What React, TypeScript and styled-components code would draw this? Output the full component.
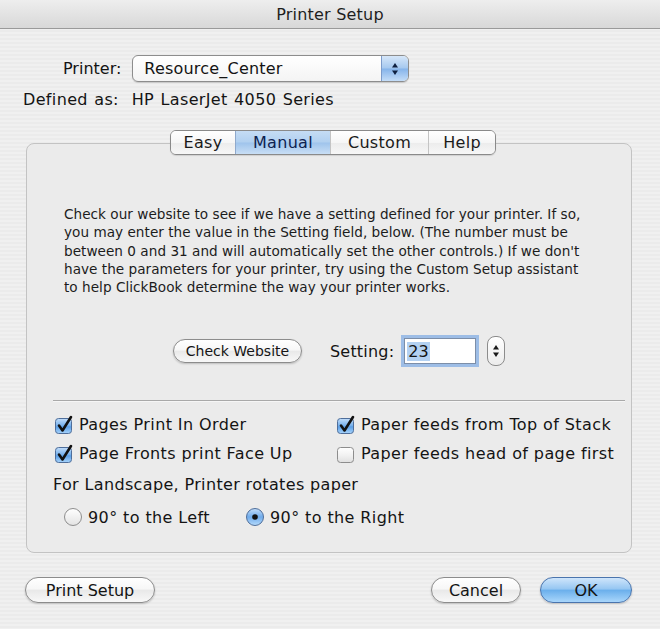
import React from "react";
import styled, { createGlobalStyle } from "styled-components";

const GlobalStyle = createGlobalStyle`
  html, body { margin: 0; padding: 0; }
  body {
    font-family: "DejaVu Sans", "Liberation Sans", sans-serif;
    color: #141414;
  }
`;

const Window = styled.div`
  width: 660px;
  height: 629px;
  display: flex;
  flex-direction: column;
  background: repeating-linear-gradient(#f0f0f0 0 2px, #ebebeb 2px 4px);
  overflow: hidden;
`;

const TitleBar = styled.div`
  height: 28px;
  flex-shrink: 0;
  display: flex;
  align-items: center;
  justify-content: center;
  font-size: 16px;
  letter-spacing: 0.2px;
  color: #1e1e1e;
  background: linear-gradient(#eeeeee, #d8d8d8);
  border-bottom: 1px solid #9a9a9a;
`;

const PrinterRow = styled.div`
  margin-top: 26px;
  padding-left: 63px;
  display: flex;
  align-items: center;
  gap: 11px;
  font-size: 16px;
`;

const Popup = styled.div`
  width: 277px;
  height: 27px;
  box-sizing: border-box;
  display: flex;
  border: 1px solid #8d8d8d;
  border-radius: 6px;
  overflow: hidden;
  background: linear-gradient(#ffffff, #f4f4f4);
  box-shadow: 0 1px 1px rgba(0, 0, 0, 0.15);
`;

const PopupText = styled.span`
  flex: 1;
  padding-left: 11px;
  line-height: 25px;
  letter-spacing: 0.2px;
`;

const PopupArrows = styled.div`
  width: 26px;
  display: flex;
  align-items: center;
  justify-content: center;
  border-left: 1px solid #7d9ccb;
  background: linear-gradient(#d6e7f9 0%, #a6c9ef 48%, #86b4ea 52%, #c4ddf8 100%);
`;

const DefinedRow = styled.div`
  margin-top: 8px;
  padding-left: 23px;
  font-size: 16px;
  line-height: 20px;
  letter-spacing: 0.35px;
  word-spacing: 1px;
`;

const TabStrip = styled.div`
  margin-top: 20px;
  margin-left: 170px;
  display: flex;
  position: relative;
  z-index: 1;
  align-self: flex-start;
  border: 1px solid #8a8a8a;
  border-radius: 6px;
  overflow: hidden;
  box-shadow: 0 1px 1px rgba(0, 0, 0, 0.12);
`;

const Tab = styled.div<{ $active?: boolean; $w: number }>`
  width: ${(p) => p.$w}px;
  height: 23px;
  display: flex;
  align-items: center;
  justify-content: center;
  font-size: 16px;
  letter-spacing: 0.3px;
  color: ${(p) => (p.$active ? "#0e2250" : "#1a1a1a")};
  border-left: 1px solid ${(p) => (p.$active ? "#8fa9cc" : "#c4c4c4")};
  &:first-child { border-left: none; }
  background: ${(p) =>
    p.$active
      ? "linear-gradient(#c5dcf4 0%, #b1d0f0 48%, #9fc4ec 52%, #c8def5 100%)"
      : "linear-gradient(#ffffff 0%, #f6f6f6 50%, #ececec 52%, #f7f7f7 100%)"};
`;

const Group = styled.div`
  margin-top: -12px;
  margin-left: 26px;
  width: 606px;
  height: 410px;
  box-sizing: border-box;
  padding: 61px 6px 0 26px;
  border: 1px solid #c3c3c3;
  border-radius: 8px;
  background: #ebebeb;
  display: flex;
  flex-direction: column;
`;

const Paragraph = styled.p`
  margin: 0 0 0 11px;
  font-size: 13.6px;
  line-height: 18.3px;
  letter-spacing: 0.03px;
  color: #1c1c1c;
`;

const SettingRow = styled.div`
  margin: 39px 0 0 120px;
  height: 32px;
  display: flex;
  align-items: center;
  font-size: 16px;
`;

const PillButton = styled.button<{ $w: number; $primary?: boolean; $h?: number }>`
  width: ${(p) => p.$w}px;
  height: ${(p) => p.$h ?? 26}px;
  padding: 0;
  font-family: inherit;
  font-size: ${(p) => (p.$h ? 14 : 16)}px;
  color: #141414;
  border-radius: 14px;
  border: 1px solid ${(p) => (p.$primary ? "#4a74ad" : "#8c8c8c")};
  background: ${(p) =>
    p.$primary
      ? "linear-gradient(#cfe5fb 0%, #97c7f2 45%, #6cb0ec 52%, #a9d6fb 100%)"
      : "linear-gradient(#ffffff 0%, #f7f7f7 45%, #e9e9e9 52%, #f8f8f8 100%)"};
  box-shadow: 0 1px 2px rgba(0, 0, 0, 0.2);
`;

const SettingLabel = styled.span`
  margin-left: 28px;
  letter-spacing: 0.2px;
`;

const Field = styled.div`
  margin-left: 10px;
  width: 72px;
  height: 26px;
  box-sizing: border-box;
  border: 1px solid #7c8ea8;
  background: #fff;
  box-shadow: 0 0 0 3px #9dbde6;
  display: flex;
  align-items: center;
  padding-left: 2px;
`;

const Selected = styled.span`
  background: #b3d1f2;
  line-height: 19px;
  padding: 0 1px;
`;

const Stepper = styled.div`
  margin-left: 11px;
  width: 18px;
  height: 30px;
  box-sizing: border-box;
  border: 1px solid #8c8c8c;
  border-radius: 8px;
  background: linear-gradient(#ffffff, #ececec);
  display: flex;
  align-items: center;
  justify-content: center;
`;

const Separator = styled.div`
  margin-top: 33px;
  height: 1px;
  background: #a9a9a9;
  border-bottom: 1px solid #f6f6f6;
`;

const CheckGrid = styled.div`
  margin: 8px 0 0 1px;
  display: grid;
  grid-template-columns: 282px 1fr;
  grid-auto-rows: 29px;
  font-size: 16px;
`;

const Option = styled.label`
  display: flex;
  align-items: center;
  gap: 5px;
  white-space: nowrap;
  letter-spacing: 0.4px;
`;

const LandscapeLabel = styled.div`
  margin-top: 7px;
  font-size: 16px;
  line-height: 20px;
  letter-spacing: 0.35px;
`;

const RadioRow = styled.div`
  margin: 11px 0 0 10px;
  height: 22px;
  display: flex;
  font-size: 16px;
`;

const RadioSlot = styled.div<{ $w: number }>`
  width: ${(p) => p.$w}px;
  display: flex;
`;

const Footer = styled.div`
  margin-top: 24px;
  padding: 0 28px 0 25px;
  display: flex;
  align-items: center;
  gap: 19px;
`;

const Spacer = styled.div`
  flex: 1;
`;

const Arrows = ({ color = "#1a1a1a" }: { color?: string }) => (
  <svg width="8" height="16" viewBox="0 0 8 16">
    <path d="M4 2 L7 6.5 L1 6.5 Z" fill={color} />
    <path d="M4 14 L7 9.5 L1 9.5 Z" fill={color} />
  </svg>
);

const CheckBox = ({ checked }: { checked?: boolean }) => (
  <svg width="20" height="20" viewBox="0 0 20 20">
    <defs>
      <linearGradient id="cbBlue" x1="0" y1="0" x2="0" y2="1">
        <stop offset="0" stopColor="#c4defa" />
        <stop offset="0.5" stopColor="#72aeeb" />
        <stop offset="0.55" stopColor="#5a9ee6" />
        <stop offset="1" stopColor="#a8d4fb" />
      </linearGradient>
      <linearGradient id="cbWhite" x1="0" y1="0" x2="0" y2="1">
        <stop offset="0" stopColor="#ffffff" />
        <stop offset="0.5" stopColor="#f2f2f2" />
        <stop offset="1" stopColor="#e0e0e0" />
      </linearGradient>
    </defs>
    <rect
      x="1.5"
      y="3.5"
      width="16"
      height="15"
      rx="3"
      fill={checked ? "url(#cbBlue)" : "url(#cbWhite)"}
      stroke={checked ? "#4f6e9a" : "#8d8d8d"}
    />
    {checked && (
      <path
        d="M5 10.5 L8.5 15.5 L17 2"
        fill="none"
        stroke="#111"
        strokeWidth="2.6"
        strokeLinecap="round"
        strokeLinejoin="round"
      />
    )}
  </svg>
);

const Radio = ({ on }: { on?: boolean }) => (
  <svg width="20" height="20" viewBox="0 0 20 20">
    <defs>
      <linearGradient id="rbBlue" x1="0" y1="0" x2="0" y2="1">
        <stop offset="0" stopColor="#c4defa" />
        <stop offset="0.5" stopColor="#6fabeb" />
        <stop offset="1" stopColor="#b6dbfc" />
      </linearGradient>
      <linearGradient id="rbWhite" x1="0" y1="0" x2="0" y2="1">
        <stop offset="0" stopColor="#ffffff" />
        <stop offset="0.5" stopColor="#f1f1f1" />
        <stop offset="1" stopColor="#e3e3e3" />
      </linearGradient>
    </defs>
    <circle
      cx="10"
      cy="10"
      r="8.5"
      fill={on ? "url(#rbBlue)" : "url(#rbWhite)"}
      stroke={on ? "#4f6e9a" : "#8d8d8d"}
    />
    {on && <circle cx="10" cy="10" r="2.8" fill="#111" />}
  </svg>
);

const paragraphLines = [
  "Check our website to see if we have a setting defined for your printer. If so,",
  "you may enter the value in the Setting field, below. (The number must be",
  "between 0 and 31 and will automatically set the other controls.) If we don't",
  "have the parameters for your printer, try using the Custom Setup assistant",
  "to help ClickBook determine the way your printer works.",
];

const tabs = [
  { label: "Easy", w: 64 },
  { label: "Manual", w: 94, active: true },
  { label: "Custom", w: 97 },
  { label: "Help", w: 66 },
];

export default function App() {
  return (
    <Window>
      <GlobalStyle />
      <TitleBar>Printer Setup</TitleBar>

      <PrinterRow>
        <span>Printer:</span>
        <Popup>
          <PopupText>Resource_Center</PopupText>
          <PopupArrows>
            <Arrows color="#0f2040" />
          </PopupArrows>
        </Popup>
      </PrinterRow>

      <DefinedRow>Defined as:&nbsp; HP LaserJet 4050 Series</DefinedRow>

      <TabStrip>
        {tabs.map((t) => (
          <Tab key={t.label} $w={t.w} $active={t.active}>
            {t.label}
          </Tab>
        ))}
      </TabStrip>

      <Group>
        <Paragraph>
          {paragraphLines.map((line, i) => (
            <React.Fragment key={i}>
              {line}
              {i < paragraphLines.length - 1 && <br />}
            </React.Fragment>
          ))}
        </Paragraph>

        <SettingRow>
          <PillButton $w={129} $h={24}>
            Check Website
          </PillButton>
          <SettingLabel>Setting:</SettingLabel>
          <Field>
            <Selected>23</Selected>
          </Field>
          <Stepper>
            <Arrows />
          </Stepper>
        </SettingRow>

        <Separator />

        <CheckGrid>
          <Option>
            <CheckBox checked />
            Pages Print In Order
          </Option>
          <Option>
            <CheckBox checked />
            Paper feeds from Top of Stack
          </Option>
          <Option>
            <CheckBox checked />
            Page Fronts print Face Up
          </Option>
          <Option>
            <CheckBox />
            Paper feeds head of page first
          </Option>
        </CheckGrid>

        <LandscapeLabel>For Landscape, Printer rotates paper</LandscapeLabel>

        <RadioRow>
          <RadioSlot $w={182}>
            <Option>
              <Radio />
              90° to the Left
            </Option>
          </RadioSlot>
          <RadioSlot $w={200}>
            <Option>
              <Radio on />
              90° to the Right
            </Option>
          </RadioSlot>
        </RadioRow>
      </Group>

      <Footer>
        <PillButton $w={130}>Print Setup</PillButton>
        <Spacer />
        <PillButton $w={90}>Cancel</PillButton>
        <PillButton $w={92} $primary>
          OK
        </PillButton>
      </Footer>
    </Window>
  );
}
